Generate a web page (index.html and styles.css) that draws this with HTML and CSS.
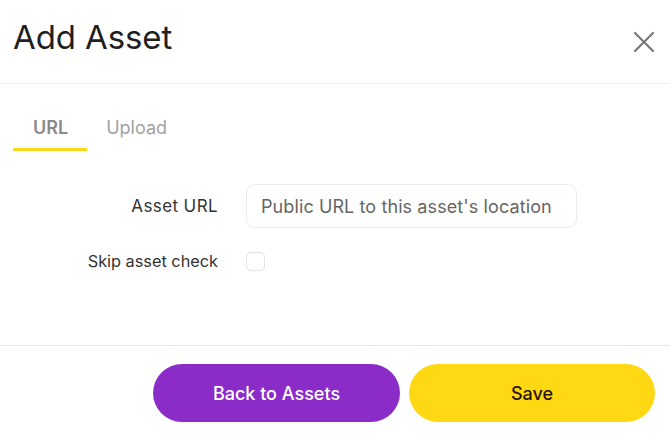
FILE: index.html
```html
<!DOCTYPE html>
<html>
<head>
<meta charset="utf-8">
<link rel="stylesheet" href="styles.css">
</head>
<body>
<div class="modal">
  <header class="header">
    <h1 class="title">Add Asset</h1>
    <button class="close" aria-label="Close">
      <svg width="22" height="22" viewBox="0 0 22 22"><path d="M2 2 L20 20 M20 2 L2 20" stroke="#7a7a7a" stroke-width="2.2" stroke-linecap="round" fill="none"/></svg>
    </button>
  </header>
  <section class="body">
    <nav class="tabs">
      <div class="tab active">URL</div>
      <div class="tab">Upload</div>
    </nav>
    <div class="form">
      <label class="label big">Asset URL</label>
      <div class="input">Public URL to this asset's location</div>
      <label class="label">Skip asset check</label>
      <div class="checkwrap"><span class="checkbox"></span></div>
    </div>
  </section>
  <footer class="footer">
    <button class="btn purple">Back to Assets</button>
    <button class="btn yellow">Save</button>
  </footer>
</div>
</body>
</html>
```

FILE: styles.css
```css
* { box-sizing: border-box; }
html, body { margin: 0; padding: 0; background: #fff; }
body { font-family: Inter, "Noto Sans", sans-serif; color: #222; width: 670px; height: 433px; overflow: hidden; }
.modal { display: flex; flex-direction: column; height: 433px; }
.header {
  height: 84px;
  border-bottom: 1px solid #eeeeee;
  display: flex;
  align-items: flex-start;
  justify-content: space-between;
  padding: 17px 13px 0 13px;
}
.title { margin: 0; font-size: 33px; font-weight: 400; line-height: 40px; letter-spacing: -0.1px; color: #1f1f1f; }
.close { border: 0; background: none; padding: 0; margin-top: 14px; margin-right: 2px; width: 22px; height: 22px; display: flex; }
.body { height: 262px; border-bottom: 1px solid #e6e6e6; padding: 0 13px; }
.tabs { display: flex; margin-top: 29px; }
.tab { font-size: 18px; line-height: 24px; padding: 3px 19px 8px; color: #a2a2a2; }
.tab.active { color: #8a8a8a; font-weight: 600; border-bottom: 3px solid #fcd916; padding-left: 20px; }
.form {
  display: grid;
  grid-template-columns: 205px 331px;
  column-gap: 28px;
  row-gap: 23px;
  align-items: center;
  margin-top: 33px;
}
.label { text-align: right; font-size: 16.3px; color: #333; }
.label.big { font-size: 17px; letter-spacing: 0.4px; }
.input {
  height: 44px;
  border: 1px solid #ececec;
  border-radius: 9px;
  padding-left: 14px;
  display: flex;
  align-items: center;
  font-size: 18px;
  letter-spacing: 0.1px;
  color: #666;
}
.checkwrap { display: flex; align-items: center; }
.checkbox { width: 19px; height: 19px; border: 1px solid #e2e2e2; border-radius: 5px; }
.footer { display: flex; justify-content: flex-end; gap: 9px; padding: 18px 15px 0 0; }
.btn {
  border: 0;
  height: 58px;
  border-radius: 29px;
  font-family: Inter, "Noto Sans", sans-serif;
  font-size: 18px;
  font-weight: 500;
}
.purple { width: 247px; background: #8b2cc9; color: #fff; }
.yellow { width: 246px; background: #fdd813; color: #2a1500; }
```
